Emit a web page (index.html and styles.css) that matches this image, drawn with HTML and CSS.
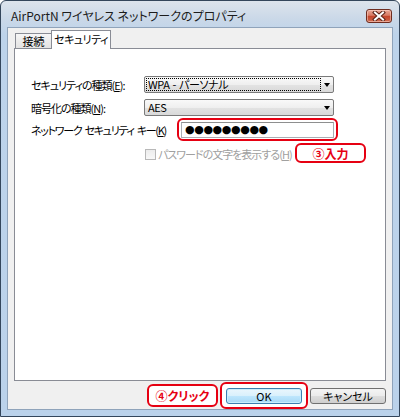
FILE: index.html
```html
<!DOCTYPE html>
<html lang="ja">
<head>
<meta charset="utf-8">
<title>AirPortN ワイヤレス ネットワークのプロパティ</title>
<link rel="stylesheet" href="styles.css">
</head>
<body>
<div class="window">
  <div class="titlebar">
    <span class="title">AirPortN ワイヤレス ネットワークのプロパティ</span>
    <div class="close">
      <svg width="14" height="10" viewBox="0 0 14 10">
        <path d="M3 1.5 L11 8.5 M11 1.5 L3 8.5" stroke="#5a2418" stroke-width="4" stroke-linecap="square" fill="none"/>
        <path d="M3 1.5 L11 8.5 M11 1.5 L3 8.5" stroke="#ffffff" stroke-width="2" stroke-linecap="square" fill="none"/>
      </svg>
    </div>
  </div>
  <div class="client">
    <div class="tabs">
      <div class="tab">接続</div>
      <div class="tab active">セキュリティ</div>
    </div>
    <div class="panel">
      <div class="row">
        <span class="lbl">セキュリティの種類(<u>E</u>):</span>
        <div class="combo"><span class="val focus">WPA - パーソナル</span><span class="arrow"></span></div>
      </div>
      <div class="row r2">
        <span class="lbl">暗号化の種類(<u>N</u>):</span>
        <div class="combo"><span class="val">AES</span><span class="arrow"></span></div>
      </div>
      <div class="row r3">
        <span class="lbl wide">ネットワーク セキュリティ キー(<u>K</u>)</span>
        <div class="mark keymark"><div class="input">●●●●●●●●●</div></div>
      </div>
      <div class="row r4">
        <span class="lbl"></span>
        <div class="checkrow">
          <span class="checkbox"></span>
          <span class="checktext">パスワードの文字を表示する(<u>H</u>)</span>
          <span class="note input-note">③入力</span>
        </div>
      </div>
    </div>
    <div class="buttons">
      <span class="note click-note">④クリック</span>
      <div class="mark okmark"><div class="btn default">OK</div></div>
      <div class="btn">キャンセル</div>
    </div>
  </div>
</div>
</body>
</html>
```
FILE: styles.css
```css
* { box-sizing: border-box; margin: 0; padding: 0; }
body {
  margin: 0;
  background: #ffffff;
  font-family: "Noto Sans CJK JP", "Noto Sans", sans-serif;
  font-feature-settings: "palt";
  color: #000;
}
.window {
  width: 400px;
  height: 417px;
  border: 1px solid #34465b;
  border-radius: 6px 6px 0 0;
  background: linear-gradient(#dde4ec 0, #cad8e8 18px, #bdd3ea 34px, #bbd2ea 100%);
  display: flex;
  flex-direction: column;
  overflow: hidden;
}
.titlebar {
  height: 26px;
  display: flex;
  align-items: flex-start;
  padding: 0 7px 0 10px;
}
.title {
  flex: 1;
  font-size: 12px;
  line-height: 14px;
  margin-top: 8px;
  color: #1c1c1c;
  white-space: nowrap;
}
.close {
  width: 26px;
  height: 14px;
  margin-top: 8px;
  border: 1px solid #6e2d20;
  border-radius: 3px;
  background: linear-gradient(#eaa896 0, #d77a63 45%, #c4442a 50%, #c8573c 80%, #d77a60 100%);
  box-shadow: inset 0 0 0 1px rgba(255,220,210,0.5);
  display: flex;
  align-items: center;
  justify-content: center;
}
.client {
  flex: 1;
  margin: 0 6px 6px;
  border: 1px solid #8fa3ba;
  background: #f0f0f0;
  display: flex;
  flex-direction: column;
  padding: 0 6px;
}
.tabs {
  height: 20px;
  display: flex;
  align-items: flex-end;
  padding-left: 1px;
  position: relative;
  z-index: 1;
}
.tab {
  height: 15px;
  border: 1px solid #898c95;
  border-bottom: none;
  background: linear-gradient(#f6f6f6, #e2e2e2);
  font-size: 11px;
  line-height: 14px;
  width: 37px;
  text-align: center;
}
.tab.active {
  height: 19px;
  width: 60px;
  margin-left: -1px;
  margin-bottom: -1px;
  background: #ffffff;
  line-height: 16px;
  letter-spacing: -0.5px;
}
.panel {
  flex: 1;
  border: 1px solid #898c95;
  background: #ffffff;
  padding: 27px 0 0 16px;
  display: flex;
  flex-direction: column;
}
.row {
  display: flex;
  align-items: center;
  height: 17px;
}
.r2 { margin-top: 6px; }
.r3 { margin-top: 2px; height: 23px; }
.r4 { margin-top: 2px; height: 20px; }
.lbl {
  width: 113px;
  font-size: 11px;
  letter-spacing: -1px;
  white-space: nowrap;
  flex: none;
}
.lbl.wide { width: 146px; letter-spacing: -1.3px; word-spacing: 2px; }
.combo {
  width: 190px;
  height: 17px;
  border: 1px solid #7a7a7a;
  border-radius: 2px;
  background: linear-gradient(#f9f9f9 0, #efefef 50%, #e3e3e3 51%, #d9d9d9 100%);
  display: flex;
  align-items: center;
  padding: 1px 0 1px 1px;
}
.val {
  flex: 1;
  height: 13px;
  font-size: 11px;
  line-height: 11px;
  letter-spacing: -0.4px;
  word-spacing: 1px;
  padding-left: 1px;
  border: 1px dotted transparent;
  margin-right: 16px;
  white-space: nowrap;
}
.val.focus { border-color: #000; }
.arrow {
  width: 0;
  height: 0;
  border-left: 3.5px solid transparent;
  border-right: 3.5px solid transparent;
  border-top: 4px solid #000;
  margin-right: 3px;
  margin-left: -13px;
}
.mark {
  border: 2px solid #e60012;
  border-radius: 6px;
  background: #ffffff;
  display: flex;
  align-items: center;
  justify-content: center;
}
.keymark {
  width: 161px;
  height: 23px;
}
.input {
  width: 153px;
  height: 16px;
  border: 1px solid #abadb3;
  border-top-color: #8e8f8f;
  background: #fff;
  font-family: "DejaVu Sans", sans-serif;
  font-size: 11px;
  line-height: 14px;
  letter-spacing: -0.4px;
  padding-left: 3px;
  white-space: nowrap;
  overflow: hidden;
}
.checkrow {
  width: 222px;
  display: flex;
  align-items: center;
  height: 20px;
}
.checkbox {
  width: 11px;
  height: 11px;
  border: 1px solid #b8b8b8;
  background: linear-gradient(#ececec, #f8f8f8);
  margin: 3px 2px 0 1px;
  flex: none;
}
.checktext {
  font-size: 11px;
  letter-spacing: -1px;
  color: #a0a0a0;
  white-space: nowrap;
  margin-top: 1px;
}
.note {
  border: 2px solid #e60012;
  border-radius: 6px;
  background: #ffffff;
  color: #e60012;
  font-weight: bold;
  font-size: 12px;
  display: flex;
  align-items: center;
  justify-content: center;
  white-space: nowrap;
}
.input-note {
  margin-left: auto;
  width: 71px;
  height: 20px;
}
.buttons {
  margin-top: 1px;
  height: 27px;
  display: flex;
  justify-content: flex-end;
  align-items: center;
  gap: 2px;
}
.click-note {
  width: 71px;
  height: 23px;
}
.okmark {
  width: 88px;
  height: 27px;
}
.btn {
  width: 76px;
  height: 16px;
  border: 1px solid #707070;
  border-radius: 3px;
  background: linear-gradient(#f4f4f4 0, #ebebeb 50%, #dddddd 51%, #cfcfcf 100%);
  font-size: 11px;
  line-height: 14px;
  text-align: center;
  white-space: nowrap;
}
.btn.default {
  border-color: #3c7fb1;
  background: linear-gradient(#eaf6fd 0, #d9f0fc 50%, #bee6fd 51%, #a7d9f5 100%);
  box-shadow: inset 0 0 0 1px #c8eefc;
}
```
